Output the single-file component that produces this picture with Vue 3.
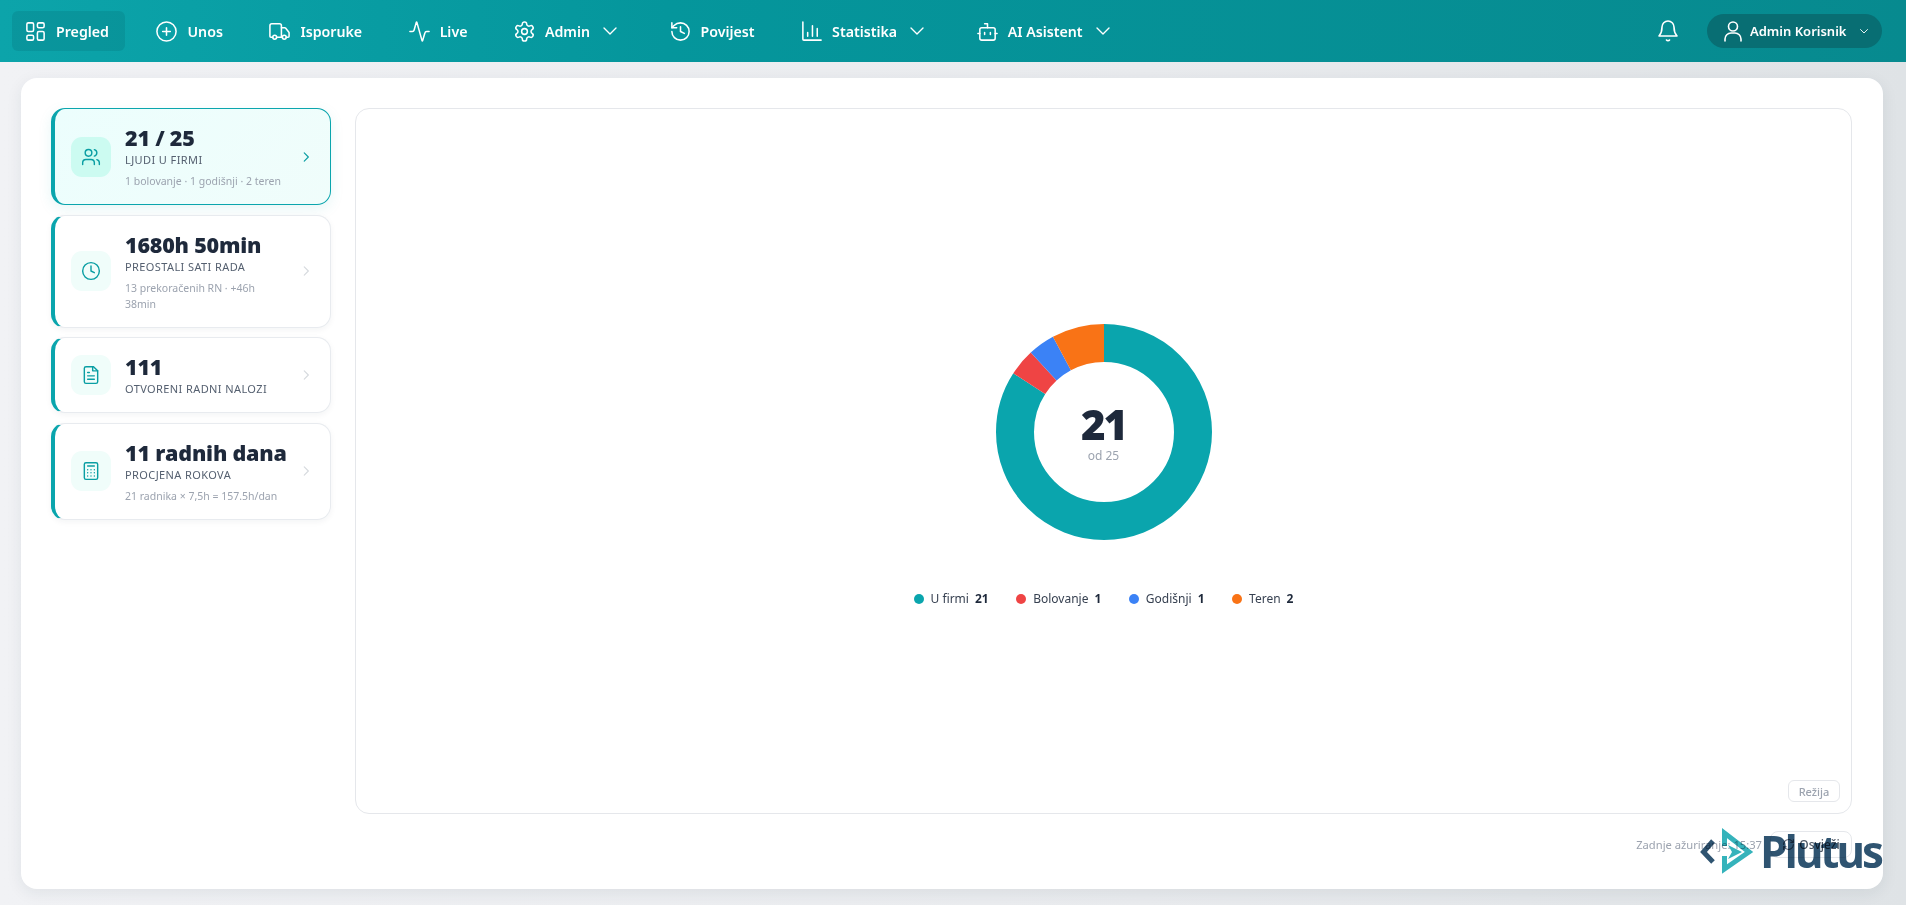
<script setup>
const segments = [
  { label: 'U firmi', value: 21, color: '#0aa5ad' },
  { label: 'Bolovanje', value: 1, color: '#ef4444' },
  { label: 'Godišnji', value: 1, color: '#3b82f6' },
  { label: 'Teren', value: 2, color: '#f97316' },
]
const total = segments.reduce((s, x) => s + x.value, 0)
const R = 89
const C = 2 * Math.PI * R
let acc = 0
const arcs = segments.map((s) => {
  const len = (s.value / total) * C
  const a = { color: s.color, dash: `${len} ${C - len}`, offset: -acc }
  acc += len
  return a
})
</script>

<template>
  <div class="page">
    <header class="topbar">
      <nav class="nav">
        <a class="item active">
          <svg class="ic" viewBox="0 0 24 24"><rect x="3" y="3" width="7" height="9" rx="1.5"/><rect x="14" y="3" width="7" height="5" rx="1.5"/><rect x="14" y="12" width="7" height="9" rx="1.5"/><rect x="3" y="16" width="7" height="5" rx="1.5"/></svg>
          <span>Pregled</span>
        </a>
        <a class="item">
          <svg class="ic" viewBox="0 0 24 24"><circle cx="12" cy="12" r="10"/><path d="M12 8v8M8 12h8"/></svg>
          <span>Unos</span>
        </a>
        <a class="item">
          <svg class="ic" viewBox="0 0 24 24"><path d="M14 18V6a2 2 0 0 0-2-2H4a2 2 0 0 0-2 2v11a1 1 0 0 0 1 1h2"/><path d="M15 18H9"/><path d="M19 18h2a1 1 0 0 0 1-1v-3.65a1 1 0 0 0-.22-.62l-3.48-4.35A1 1 0 0 0 17.520 8H14"/><circle cx="17" cy="18" r="2"/><circle cx="7" cy="18" r="2"/></svg>
          <span>Isporuke</span>
        </a>
        <a class="item">
          <svg class="ic" viewBox="0 0 24 24"><path d="M22 12h-2.5a2 2 0 0 0-1.9 1.5l-2.4 8.3a.25.25 0 0 1-.48 0L9.2 2.2a.25.25 0 0 0-.48 0L6.4 10.5A2 2 0 0 1 4.500 12H2"/></svg>
          <span>Live</span>
        </a>
        <a class="item">
          <svg class="ic" viewBox="0 0 24 24"><path d="M12.22 2h-.44a2 2 0 0 0-2 2v.18a2 2 0 0 1-1 1.73l-.43.25a2 2 0 0 1-2 0l-.15-.08a2 2 0 0 0-2.73.73l-.22.38a2 2 0 0 0 .73 2.73l.15.1a2 2 0 0 1 1 1.72v.51a2 2 0 0 1-1 1.74l-.15.09a2 2 0 0 0-.73 2.73l.22.38a2 2 0 0 0 2.73.73l.15-.08a2 2 0 0 1 2 0l.43.25a2 2 0 0 1 1 1.73V20a2 2 0 0 0 2 2h.44a2 2 0 0 0 2-2v-.18a2 2 0 0 1 1-1.73l.43-.25a2 2 0 0 1 2 0l.15.08a2 2 0 0 0 2.73-.73l.22-.39a2 2 0 0 0-.73-2.73l-.15-.08a2 2 0 0 1-1-1.74v-.5a2 2 0 0 1 1-1.74l.15-.09a2 2 0 0 0 .73-2.73l-.22-.38a2 2 0 0 0-2.73-.73l-.15.08a2 2 0 0 1-2 0l-.43-.25a2 2 0 0 1-1-1.73V4a2 2 0 0 0-2-2z"/><circle cx="12" cy="12" r="3"/></svg>
          <span>Admin</span>
          <svg class="chev" viewBox="0 0 24 24"><path d="m4 8 8 8 8-8"/></svg>
        </a>
        <a class="item">
          <svg class="ic" viewBox="0 0 24 24"><path d="M3 12a9 9 0 1 0 9-9 9.750 9.750 0 0 0-6.740 2.740L3 8"/><path d="M3 3v5h5"/><path d="M12 7v5l4 2"/></svg>
          <span>Povijest</span>
        </a>
        <a class="item">
          <svg class="ic" viewBox="0 0 24 24"><path d="M3 2v18a1 1 0 0 0 1 1h18"/><path d="M8 17v-4M13 17V6M18 17V9"/></svg>
          <span>Statistika</span>
          <svg class="chev" viewBox="0 0 24 24"><path d="m4 8 8 8 8-8"/></svg>
        </a>
        <a class="item">
          <svg class="ic" viewBox="0 0 24 24"><path d="M12 8V4H9"/><rect x="4" y="8" width="16" height="13" rx="2"/><path d="M2 14h2M20 14h2M15 13v2M9 13v2"/></svg>
          <span>AI Asistent</span>
          <svg class="chev" viewBox="0 0 24 24"><path d="m4 8 8 8 8-8"/></svg>
        </a>
      </nav>
      <div class="right">
        <svg class="ic bell" viewBox="0 0 24 24"><path d="M6 8a6 6 0 0 1 12 0c0 7 3 8.500 3 9H3c0-.5 3-2 3-9"/><path d="M10.500 21a1.800 1.800 0 0 0 3 0"/></svg>
        <div class="user">
          <svg class="ic face" viewBox="0 0 24 24"><circle cx="12" cy="7.500" r="4.500"/><path d="M4 22v-2a6 6 0 0 1 6-6h4a6 6 0 0 1 6 6v2"/></svg>
          <span>Admin Korisnik</span>
          <svg class="chev small" viewBox="0 0 24 24"><path d="m5 9 7 7 7-7"/></svg>
        </div>
      </div>
    </header>

    <main class="sheet">
      <div class="columns">
        <aside class="side">
          <div class="card selected">
            <div class="badge strong">
              <svg class="ci" viewBox="0 0 24 24"><circle cx="9" cy="7" r="4"/><path d="M16 21v-2a4 4 0 0 0-4-4H6a4 4 0 0 0-4 4v2"/><path d="M16 3.130a4 4 0 0 1 0 7.750"/><path d="M22 21v-2a4 4 0 0 0-3-3.870"/></svg>
            </div>
            <div class="body">
              <div class="title">21 / 25</div>
              <div class="label">LJUDI U FIRMI</div>
              <div class="sub">1 bolovanje · 1 godišnji · 2 teren</div>
            </div>
            <svg class="go on" viewBox="0 0 24 24"><path d="m9 5 7 7-7 7"/></svg>
          </div>
          <div class="card">
            <div class="badge">
              <svg class="ci" viewBox="0 0 24 24"><circle cx="12" cy="12" r="10"/><path d="M12 6v6l4 2"/></svg>
            </div>
            <div class="body">
              <div class="title">1680h 50min</div>
              <div class="label">PREOSTALI SATI RADA</div>
              <div class="sub">13 prekoračenih RN · +46h 38min</div>
            </div>
            <svg class="go" viewBox="0 0 24 24"><path d="m9 5 7 7-7 7"/></svg>
          </div>
          <div class="card">
            <div class="badge">
              <svg class="ci" viewBox="0 0 24 24"><path d="M15 2H6a2 2 0 0 0-2 2v16a2 2 0 0 0 2 2h12a2 2 0 0 0 2-2V7z"/><path d="M14 2v5h6"/><path d="M8 9h2M8 13h8M8 17h8"/></svg>
            </div>
            <div class="body">
              <div class="title">111</div>
              <div class="label">OTVORENI RADNI NALOZI</div>
            </div>
            <svg class="go" viewBox="0 0 24 24"><path d="m9 5 7 7-7 7"/></svg>
          </div>
          <div class="card">
            <div class="badge">
              <svg class="ci" viewBox="0 0 24 24"><rect x="4" y="2" width="16" height="20" rx="2"/><path d="M8 6h8M8 10.500h.01M12 10.500h.01M16 10.500h.01M8 14h.01M12 14h.01M16 14h.01M8 18h.01M12 18h.01M16 18h.01"/></svg>
            </div>
            <div class="body">
              <div class="title">11 radnih dana</div>
              <div class="label">PROCJENA ROKOVA</div>
              <div class="sub">21 radnika × 7,5h = 157.5h/dan</div>
            </div>
            <svg class="go" viewBox="0 0 24 24"><path d="m9 5 7 7-7 7"/></svg>
          </div>
        </aside>

        <section class="panel">
          <div class="donut">
            <svg width="216" height="216" viewBox="0 0 216 216">
              <g transform="rotate(-90 108 108)">
                <circle v-for="a in arcs" :key="a.color" cx="108" cy="108" :r="R" fill="none" :stroke="a.color" stroke-width="38" :stroke-dasharray="a.dash" :stroke-dashoffset="a.offset" />
              </g>
            </svg>
            <div class="center">
              <div class="big">21</div>
              <div class="of">od 25</div>
            </div>
          </div>
          <div class="legend">
            <div v-for="s in segments" :key="s.label" class="lg">
              <i class="dot" :style="{ background: s.color }"></i>
              <span class="lg-name">{{ s.label }}</span>
              <b class="lg-val">{{ s.value }}</b>
            </div>
          </div>
          <button class="rezija">Režija</button>
        </section>
      </div>

      <footer class="foot">
        <span class="upd">Zadnje ažuriranje: 15:37</span>
        <button class="refresh">
          <svg class="ri" viewBox="0 0 24 24"><path d="M3 12a9 9 0 0 1 15-6.700L21 8"/><path d="M21 3v5h-5"/><path d="M21 12a9 9 0 0 1-15 6.700L3 16"/><path d="M3 21v-5h5"/></svg>
          Osvježi
        </button>
      </footer>
    </main>

    <div class="logo">
      <svg class="mark" viewBox="0 0 60 50">
        <path class="m-dark" d="M13 15 3.500 26l9.500 10" />
        <path class="m-teal" d="M24.500 20V7L49 26 24.500 43V30" />
        <path class="m-teal-fill" d="M28 19l14 7-14 7 4-7z" />
      </svg>
      <span class="word">Plutus</span>
    </div>
  </div>
</template>

<style>
html, body { margin: 0; height: 100%; overflow: hidden; }
</style>

<style scoped>
.page {
  height: 905px;
  display: flex;
  flex-direction: column;
  background: linear-gradient(90deg, #f1f2f5 0%, #e9ebee 60%, #dfe3e6 100%);
  font-family: "Noto Sans", "Open Sans", sans-serif;
  position: relative;
  overflow: hidden;
}
.topbar {
  height: 62px;
  flex: none;
  box-sizing: border-box;
  padding: 0 24px 0 12px;
  display: flex;
  align-items: center;
  justify-content: space-between;
  background: linear-gradient(90deg, #0ca4aa 0%, #05969c 35%, #078a8f 100%);
  color: #fff;
}
.nav { display: flex; align-items: center; gap: 18.500px; }
.item {
  height: 40px;
  box-sizing: border-box;
  padding: 0 15px 0 12px;
  display: flex;
  align-items: center;
  gap: 9px;
  border-radius: 6px;
  font-size: 14.200px;
  font-weight: 600;
  white-space: nowrap;
}
.item.active { background: rgba(0, 60, 70, 0.13); padding-right: 16px; }
.ic { width: 23px; height: 23px; fill: none; stroke: #fff; stroke-width: 1.6; stroke-linecap: round; stroke-linejoin: round; flex: none; }
.chev { width: 18px; height: 18px; margin-left: 2px; margin-right: 4px; flex: none; fill: none; stroke: #fff; stroke-width: 1.8; stroke-linecap: round; stroke-linejoin: round; }
.chev.small { width: 12px; height: 12px; margin: 0 0 0 6px; stroke-width: 1.8; }
.right { display: flex; align-items: center; gap: 27px; }
.bell { width: 24px; height: 24px; }
.user {
  width: 175px;
  height: 34px;
  box-sizing: border-box;
  padding: 0 14px;
  display: flex;
  align-items: center;
  gap: 5px;
  border-radius: 17px;
  background: #086e73;
  font-size: 13px;
  font-weight: 600;
  white-space: nowrap;
}
.face { width: 24px; height: 24px; }
.sheet {
  flex: 1;
  margin: 16px 23px 16px 21px;
  padding: 30px 31px 0 30px;
  background: #fff;
  border-radius: 16px;
  box-shadow: 0 4px 16px rgba(30, 50, 70, 0.08);
  display: flex;
  flex-direction: column;
  min-height: 0;
}
.columns { display: flex; gap: 24px; height: 706px; flex: none; }
.side { width: 280px; flex: none; display: flex; flex-direction: column; gap: 9.500px; }
.card {
  box-sizing: border-box;
  display: flex;
  align-items: center;
  padding: 15px 17px 15px 16px;
  border: 1px solid #e8ebef;
  border-left: 4px solid #0aa5ad;
  border-radius: 14px;
  background: #fff;
  box-shadow: 0 2px 6px rgba(20, 40, 60, 0.05);
}
.card.selected {
  background: linear-gradient(135deg, #ecfefd, #f0fdfb);
  border-color: #0aa5ad;
  box-shadow: 0 4px 14px rgba(12, 165, 170, 0.1);
}
.badge {
  width: 40px;
  height: 40px;
  flex: none;
  margin-right: 14px;
  border-radius: 11px;
  background: #f0fdfa;
  display: flex;
  align-items: center;
  justify-content: center;
}
.badge.strong { background: #ccfbf1; }
.ci { width: 20px; height: 20px; fill: none; stroke: #0a9ea3; stroke-width: 1.7; stroke-linecap: round; stroke-linejoin: round; }
.body { flex: 1; min-width: 0; max-width: 160px; }
.title { font-family: "Open Sans", sans-serif; font-size: 21.500px; font-weight: 800; letter-spacing: -0.2px; line-height: 28px; color: #1e293b; white-space: nowrap; }
.label { font-size: 11px; letter-spacing: 0.4px; line-height: 16px; color: #556070; white-space: nowrap; }
.sub { font-size: 10.500px; line-height: 16px; margin-top: 5px; color: #9ca3af; }
.go { width: 14px; height: 14px; margin-left: auto; flex: none; fill: none; stroke: #d6dade; stroke-width: 2; stroke-linecap: round; stroke-linejoin: round; }
.go.on { stroke: #0a9ea3; }
.panel {
  flex: 1;
  position: relative;
  box-sizing: border-box;
  border: 1px solid #e5e7eb;
  border-radius: 14px;
  padding-top: 9px;
  display: flex;
  flex-direction: column;
  align-items: center;
  justify-content: center;
  gap: 50px;
}
.donut { position: relative; width: 216px; height: 216px; }
.donut svg { display: block; }
.center { position: absolute; inset: 0; padding-top: 3px; box-sizing: border-box; display: flex; flex-direction: column; align-items: center; justify-content: center; gap: 3px; }
.big { font-family: "Open Sans", sans-serif; font-size: 42px; font-weight: 800; letter-spacing: -2px; line-height: 42px; color: #1e293b; }
.of { font-size: 12px; line-height: 16px; color: #9ca3af; }
.legend { display: flex; gap: 27.500px; }
.lg { display: flex; align-items: center; font-size: 12px; color: #374151; }
.dot { width: 10px; height: 10px; border-radius: 50%; margin-right: 7px; }
.lg-val { margin-left: 6px; font-weight: 700; color: #1e293b; }
.rezija {
  position: absolute;
  right: 11px;
  bottom: 11px;
  width: 52px;
  height: 22px;
  padding: 0;
  background: #fff;
  border: 1px solid #e5e7eb;
  border-radius: 6px;
  color: #9ca3af;
  font: 500 11px "Noto Sans", sans-serif;
}
.foot { display: flex; justify-content: flex-end; align-items: center; gap: 8px; margin-top: 17px; }
.upd { font-size: 11.200px; color: #9ca3af; }
.refresh {
  width: 82px;
  height: 27px;
  padding: 0;
  display: flex;
  align-items: center;
  justify-content: center;
  gap: 4px;
  background: #fff;
  border: 1px solid #e5e7eb;
  border-radius: 8px;
  color: #4b5563;
  font: 500 12px "Noto Sans", sans-serif;
}
.ri { width: 13px; height: 13px; fill: none; stroke: #6b7280; stroke-width: 2; stroke-linecap: round; stroke-linejoin: round; }
.logo { position: absolute; left: 1700px; top: 826px; display: flex; align-items: center; height: 50px; mix-blend-mode: multiply; }
.mark { width: 60px; height: 50px; flex: none; }
.m-dark { fill: none; stroke: #2f5471; stroke-width: 5; }
.m-teal { fill: none; stroke: #35b3bb; stroke-width: 5; }
.m-teal-fill { fill: #35b3bb; }
.word { font-family: "Open Sans", sans-serif; font-weight: 700; font-size: 44px; line-height: 50px; color: #2f5471; letter-spacing: -3.200px; }
</style>
